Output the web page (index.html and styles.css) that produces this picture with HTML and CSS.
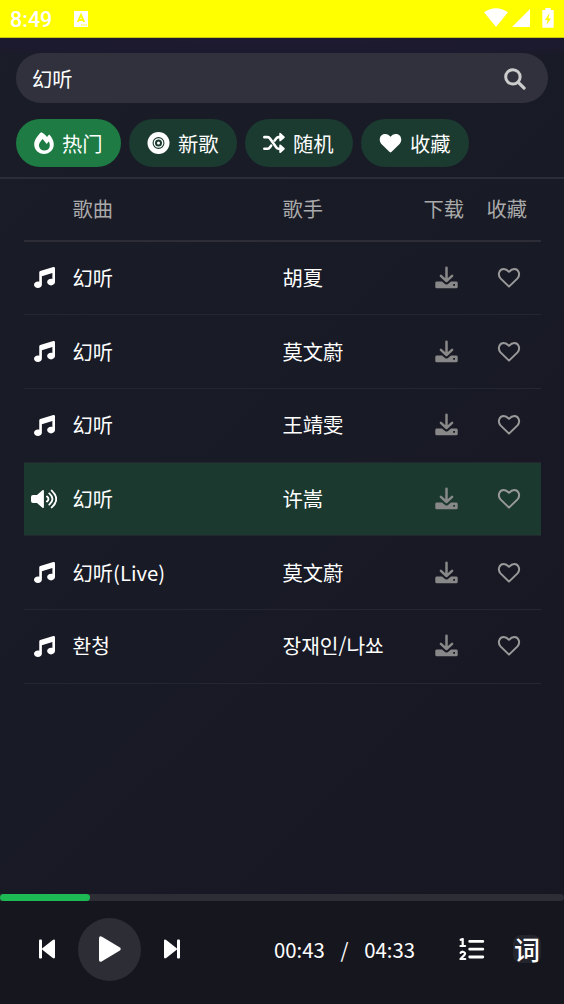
FILE: index.html
```html
<!DOCTYPE html>
<html lang="zh-CN">
<head>
<meta charset="utf-8">
<title>幻听</title>
<link rel="stylesheet" href="styles.css">
</head>
<body>
<svg class="sprite" aria-hidden="true">
  <symbol id="music" viewBox="0 0 512 512"><path d="M499.1 6.3c8.1 6 12.9 15.6 12.9 25.7v72V368c0 44.2-43 80-96 80s-96-35.8-96-80s43-80 96-80c11.2 0 22 1.6 32 4.6V147L192 223.8V432c0 44.2-43 80-96 80s-96-35.8-96-80s43-80 96-80c11.2 0 22 1.6 32 4.6V200 128c0-14.1 9.3-26.6 22.8-30.7l320-96c9.7-2.9 20.2-1.1 28.3 5z"/></symbol>
  <symbol id="download" viewBox="0 0 23 23"><path d="M1.8 15.6H7l3 2.3q1.5 1.1 3 0l3-2.3h5.2q1.500 0 1.500 1.300v4q0 1.300-1.500 1.300H1.800q-1.500 0-1.500-1.300v-4q0-1.300 1.500-1.300zM18.200 18v1.800h1.800V18z" fill-rule="evenodd"/><path d="M11.500 1.700v13M5.900 9.900l5.600 5.100 5.600-5.100" fill="none" stroke="currentColor" stroke-width="2.500" stroke-linecap="round" stroke-linejoin="round"/></symbol>
  <symbol id="heart-line" viewBox="0 0 24 22"><path d="M12 19.600 3.500 11.400C.5 8 1.800 2 6.800 1.900c2.200 0 3.700 1.200 5.200 2.900 1.500-1.700 3-2.900 5.200-2.900 5 .1 6.300 6.100 3.300 9.500z" fill="none" stroke="currentColor" stroke-width="2" stroke-linejoin="round"/></symbol>
</svg>

<header class="status">
  <span class="clock">8:49</span>
  <svg class="status-app" viewBox="0 0 14 16"><path fill="#fff" d="M0 0h14v16H0z"/><path d="M3.800 11 7 3.800l3.200 7.200M5 9h4" fill="none" stroke="#ff0" stroke-width="1.800"/><path d="M7 14h6" stroke="#ff0" stroke-width="1.200" stroke-dasharray="1.500 .7"/></svg>
  <svg class="status-signals" viewBox="0 0 70 20"><path fill="#fff" d="M0 4.300q12-8 24 0L12 19zM28 19 46 1v18zM58.300 2h3V0h5.400v2h3v17.700H58.300z"/><path fill="#ff0" d="m65.500 5-4.500 7h2.500l-1 5 4.500-6.500h-2.500z"/></svg>
</header>

<section class="search-area">
  <div class="search">
    <span>幻听</span>
    <svg viewBox="0 0 22 22"><g fill="none" stroke="currentColor" stroke-linecap="round"><circle cx="8.900" cy="8.900" r="7.200" stroke-width="3"/><path d="m14.300 14.300 5.800 5.800" stroke-width="3.200"/></g></svg>
  </div>
  <nav class="chips">
    <div class="chip chip-active">
      <svg class="ico-fire" viewBox="0 0 20 22"><path fill-rule="evenodd" d="M7.200.300C4 3 .2 8.200.2 12.300.2 17.900 4.500 22 10 22s9.800-4.100 9.800-9.700c0-3-1.900-7.300-4.500-9.800-.8.700-1.500 1.500-2.200 2.400C11.500 3 9.400 1.200 7.200.300zM5.300 15c-1.200-3.200 1.500-5.800 3.300-8 2 2.300 2.700 3.300 4 5.100l2.200-2.500c2.200 4 1 9-4.700 9-2.400 0-4.100-1.400-4.800-3.600z"/></svg>
      <span>热门</span>
    </div>
    <div class="chip">
      <svg class="ico-disc" viewBox="0 0 22 22"><circle cx="11" cy="11" r="11"/><g fill="none" stroke="#1b3a30"><circle cx="11" cy="11" r="5.400" stroke-width="1.100"/><circle cx="11" cy="11" r="2.500" stroke-width="2"/></g></svg>
      <span>新歌</span>
    </div>
    <div class="chip">
      <svg class="ico-shuffle" viewBox="0 0 23 22"><g fill="none" stroke="currentColor" stroke-width="2.700" stroke-linecap="round" stroke-linejoin="round"><path d="M1.400 4.900h3.500c1.100 0 1.800.6 2.400 1.400l6.500 9.200c.6.900 1.300 1.500 2.400 1.500h3M1.400 17h3.500c1.100 0 1.800-.6 2.400-1.500l1.200-1.700M12.200 8.400l1.600-2.100c.6-.8 1.300-1.400 2.400-1.400h3"/></g><path d="M17 1.500q0-1.800 1.700-.8l3.700 3.500q.8.700 0 1.500L18.700 9q-1.700 1-1.700-.8zM17 13.600q0-1.800 1.700-.8l3.700 3.500q.8.700 0 1.500l-3.700 3.400q-1.700 1-1.700-.8z"/></svg>
      <span>随机</span>
    </div>
    <div class="chip">
      <svg class="ico-heart" viewBox="0 0 22 20"><path d="M10.100 19.100 1.900 11C-1.300 7.400.200 1 5.700 1c2.400 0 4 1.200 5.300 2.700C12.300 2.200 13.900 1 16.300 1c5.500 0 7 6.400 3.800 10l-8.200 8.100q-.9.800-1.800 0z"/></svg>
      <span>收藏</span>
    </div>
  </nav>
</section>

<main class="songs">
  <div class="row head"><span></span><span>歌曲</span><span>歌手</span><span>下载</span><span>收藏</span></div>
  <div class="row"><svg class="note"><use href="#music"/></svg><span>幻听</span><span>胡夏</span><svg class="download"><use href="#download"/></svg><svg class="fav"><use href="#heart-line"/></svg></div>
  <div class="row"><svg class="note"><use href="#music"/></svg><span>幻听</span><span>莫文蔚</span><svg class="download"><use href="#download"/></svg><svg class="fav"><use href="#heart-line"/></svg></div>
  <div class="row"><svg class="note"><use href="#music"/></svg><span>幻听</span><span>王靖雯</span><svg class="download"><use href="#download"/></svg><svg class="fav"><use href="#heart-line"/></svg></div>
  <div class="row playing"><svg class="volume" viewBox="0 0 26 20"><path d="M12.900 2v16q0 1.700-1.500.7L6 14H2q-2 0-2-2V8q0-2 2-2h4l5.400-4.700q1.500-1 1.500.7z"/><g fill="none" stroke="currentColor" stroke-width="1.900" stroke-linecap="round"><path d="M16 7.500q3 2.500 0 5M18.300 4.400q6.400 5.600 0 11.200M20.700 1.600q9 8.400 0 16.800"/></g></svg><span>幻听</span><span>许嵩</span><svg class="download"><use href="#download"/></svg><svg class="fav"><use href="#heart-line"/></svg></div>
  <div class="row"><svg class="note"><use href="#music"/></svg><span>幻听(Live)</span><span>莫文蔚</span><svg class="download"><use href="#download"/></svg><svg class="fav"><use href="#heart-line"/></svg></div>
  <div class="row"><svg class="note"><use href="#music"/></svg><span lang="ko">환청</span><span lang="ko">장재인/나쑈</span><svg class="download"><use href="#download"/></svg><svg class="fav"><use href="#heart-line"/></svg></div>
</main>

<footer class="player">
  <div class="progress"><div class="progress-fill" style="width:16%"></div></div>
  <div class="controls">
    <svg class="skip" viewBox="0 0 16 20"><rect width="3" height="19" y=".5" rx="1"/><path d="M3.300 9.200 13.800.9Q16 0 16 2v16q0 2-2.200 1.100L3.300 10.800q-.8-.8 0-1.600z"/></svg>
    <div class="play"><svg viewBox="0 0 22 26"><path d="M0 2.500Q0-.8 3 .8l17.500 10.400q2.500 1.800 0 3.600L3 25.200q-3 1.600-3-1.700z"/></svg></div>
    <svg class="skip" viewBox="0 0 16 20"><rect width="3" height="19" x="13" y=".5" rx="1"/><path d="M12.700 9.200 2.200.9Q0 0 0 2v16q0 2 2.200 1.100l10.500-8.300q.8-.8 0-1.600z"/></svg>
    <div class="time"><span>00:43</span><span>/</span><span>04:33</span></div>
    <svg class="order" viewBox="0 0 26 22"><g fill="none" stroke="currentColor" stroke-linecap="round" stroke-linejoin="round"><path stroke-width="2.800" d="M10.700 3.400h13.100M10.700 11.200h13.100M10.700 19h13.100"/><path stroke-width="2.200" d="M1.700 1.800 3.700 1v6.800M1.500 8h4.600M1.700 14.800q.6-1.100 2.100-1.100 3.400.8 1.600 3.200L1.500 21h4.700"/></g></svg>
    <div class="lyrics">词</div>
  </div>
</footer>
</body>
</html>
```

FILE: styles.css
```css
* { box-sizing: border-box; }

body {
  margin: 0;
  width: 564px;
  height: 1004px;
  display: flex;
  flex-direction: column;
  overflow: hidden;
  background: linear-gradient(135deg, #1a1e27 0%, #191b26 20%, #181a25 50%, #181824 75%, #171722 100%);
  color: #fff;
  font: 20.3px/30px "Noto Sans CJK SC", sans-serif;
}

svg { display: block; flex: none; fill: currentColor; }
.sprite { position: absolute; width: 0; height: 0; }

.status {
  height: 38px;
  flex: none;
  display: flex;
  align-items: center;
  padding: 0 10px;
  background: #ff0;
  border-bottom: 1px solid #c9c90a;
}
.clock { font: 500 21.500px/38px Roboto, sans-serif; width: 64px; padding-top: 2px; }
.status-app { width: 14px; height: 16px; }
.status-signals { width: 70px; height: 20px; margin-left: auto; margin-top: -1px; }

.search-area {
  height: 141px;
  flex: none;
  padding: 15px 16px 0;
  border-bottom: 2px solid #2c2d37;
  background: radial-gradient(ellipse 460px 24px at 50% 0, #1e1a32 0%, #1c1a2e 70%, transparent 100%);
}
.search {
  height: 50px;
  border-radius: 25px;
  padding: 0 22px 0 16px;
  background: #30313c;
  display: flex;
  align-items: center;
  justify-content: space-between;
}
.search svg { width: 22px; height: 22px; margin-top: 2px; color: #ccc; }

.chips { display: flex; gap: 8px; margin-top: 16px; }
.chip {
  width: 108px;
  height: 48px;
  border-radius: 24px;
  background: #1b3a30;
  display: flex;
  align-items: center;
  padding-left: 18px;
  gap: 8px;
}
.chip-active { width: 105px; background: #1d7b43; }
.ico-fire { width: 20px; height: 22px; }
.ico-disc { width: 23px; height: 22px; }
.ico-shuffle { width: 22px; height: 22px; }
.ico-heart { width: 23px; height: 20px; }

.songs { flex: 1; padding: 0 23.500px; }
.row {
  display: grid;
  grid-template-columns: 49px 210px 141px 63px 54px;
  align-items: center;
  height: 73.700px;
  border-bottom: 1px solid #242630;
}
.row span { position: relative; top: -1px; }
.head { height: 62.500px; color: #aaa; border-bottom: 2px solid #2c2d37; }
.note { width: 21px; height: 21px; margin-left: 10.500px; }
.volume { width: 26px; height: 20px; margin-left: 7.500px; }
.playing { background: #1b392f; }
.download { width: 23px; height: 23px; color: #888; margin: -1px 0 0 11.500px; }
.fav { width: 24px; height: 22px; color: #999; margin-left: 10.500px; }

.player { height: 110px; flex: none; background: #16161e; }
.progress { height: 7px; background: #2d2d36; border-radius: 0 4px 4px 0; }
.progress-fill { height: 7px; background: #1db954; border-radius: 4px; }
.controls { height: 96px; display: flex; align-items: center; padding-left: 39px; }
.skip { width: 16px; height: 20px; }
.play {
  width: 63px;
  height: 63px;
  margin: 0 23px;
  border-radius: 50%;
  background: #2d2d36;
  display: flex;
  align-items: center;
  padding-left: 21px;
}
.play svg { width: 22px; height: 26px; }
.time { display: flex; justify-content: space-between; width: 141px; margin-left: 94px; }
.order { width: 26px; height: 22px; margin-left: 44px; }
.lyrics {
  width: 28px;
  height: 28px;
  margin-left: 28px;
  border-radius: 8px;
  background: #24242c;
  font-size: 26px;
  font-weight: 500;
  line-height: 27px;
  text-align: center;
}
```
